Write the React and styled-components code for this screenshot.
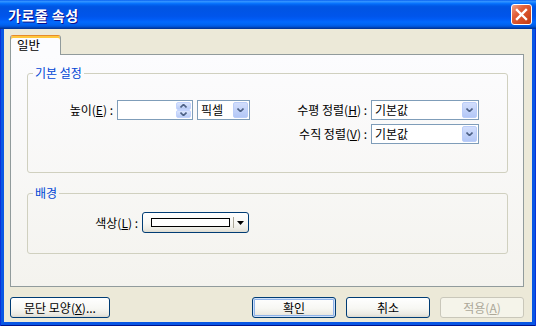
import React from 'react';
import styled, { createGlobalStyle } from 'styled-components';

const GlobalStyle = createGlobalStyle`
    html, body {
        margin: 0;
        padding: 0;
        background: #ffffff;
        overflow: hidden;
    }
    body {
        font-family: "Noto Sans CJK KR", "Noto Sans", sans-serif;
        font-size: 12px;
        color: #000000;
    }
`;

const Window = styled.div`
    width: 536px;
    height: 326px;
    display: flex;
    flex-direction: column;
    background: #0856e4;
    box-shadow: inset 1px 0 0 #0831d9, inset -1px 0 0 #0831d9, inset 0 -1px 0 #00138c;
`;

const TitleBar = styled.div`
    height: 29px;
    flex: none;
    display: flex;
    align-items: center;
    justify-content: space-between;
    padding: 0 4px 0 8px;
    background: linear-gradient(
        to bottom,
        #0058ee 0%,
        #3593ff 4%,
        #288eff 7%,
        #127dff 10%,
        #036ffc 13%,
        #0262ee 17%,
        #0057e5 22%,
        #0054e3 28%,
        #0055eb 56%,
        #005bf5 66%,
        #026afe 76%,
        #0062ef 86%,
        #0052d6 92%,
        #0040ab 96%,
        #003092 100%
    );
`;

const Title = styled.span`
    color: #ffffff;
    font-weight: bold;
    font-size: 14px;
    letter-spacing: 0.5px;
    text-shadow: 1px 1px 0 #0f1089;
`;

const CloseButton = styled.div`
    width: 21px;
    height: 21px;
    box-sizing: border-box;
    border: 1px solid #ffffff;
    border-radius: 3px;
    display: flex;
    align-items: center;
    justify-content: center;
    background: linear-gradient(135deg, #f0a38a 0%, #e2603a 35%, #d24a22 70%, #c23a12 100%);
`;

const Body = styled.div`
    flex: 1;
    margin: 0 4px 4px;
    background: #ece9d8;
    display: flex;
    flex-direction: column;
    padding: 6px 8px 4px 6px;
`;

const TabRow = styled.div`
    height: 19px;
    display: flex;
    align-items: flex-start;
`;

const Tab = styled.div`
    position: relative;
    z-index: 1;
    width: 51px;
    height: 20px;
    box-sizing: border-box;
    padding: 1px 0 0 6px;
    line-height: 16px;
    font-size: 12.5px;
    background: #fcfcfe;
    border: 1px solid #919b9c;
    border-top-color: #e68b2c;
    border-bottom: none;
    border-radius: 3px 3px 0 0;
    box-shadow: inset 0 2px 0 #ffc73c;
`;

const Panel = styled.div`
    height: 233px;
    box-sizing: border-box;
    border: 1px solid #919b9c;
    background: linear-gradient(to bottom, #fcfcfe, #f4f3ee);
    padding: 11px 15px 0 16px;
    display: flex;
    flex-direction: column;
    gap: 13px;
`;

const Group = styled.fieldset`
    margin: 0;
    min-width: 0;
    height: ${p => p.$height}px;
    box-sizing: border-box;
    padding: ${p => p.$pad}px 0 0 0;
    border: 1px solid #d0d0bf;
    border-radius: 3px;
`;

const Legend = styled.legend`
    margin-left: 5px;
    padding: 0 2px;
    color: #0046d5;
    font-size: 12px;
    line-height: 14px;
`;

const FieldGrid = styled.div`
    display: grid;
    grid-template-columns: ${p => p.$cols};
    grid-auto-rows: ${p => p.$row || 20}px;
    column-gap: 4px;
    row-gap: 4px;
    align-items: center;
`;

const Label = styled.div`
    grid-column: ${p => p.$col || 'auto'};
    text-align: right;
    white-space: nowrap;
    line-height: 20px;
`;

const SpinBox = styled.div`
    height: 20px;
    box-sizing: border-box;
    border: 1px solid #7f9db9;
    background: #ffffff;
    display: flex;
    justify-content: flex-end;
    padding: 1px;
`;

const SpinButtons = styled.div`
    width: 15px;
    display: flex;
    flex-direction: column;
`;

const SpinButton = styled.div`
    flex: 1;
    display: flex;
    align-items: center;
    justify-content: center;
    border: 1px solid #c3d3fd;
    border-radius: 2px;
    background: linear-gradient(to bottom, #dbe5fd, #b8cbf6);
`;

const Combo = styled.div`
    grid-column: ${p => p.$col || 'auto'};
    height: 20px;
    box-sizing: border-box;
    border: 1px solid #7f9db9;
    background: #ffffff;
    display: flex;
    align-items: center;
    justify-content: space-between;
    padding: 1px 1px 1px 3px;
`;

const ComboValue = styled.span`
    line-height: 16px;
    white-space: nowrap;
`;

const DropButton = styled.div`
    width: 15px;
    height: 16px;
    box-sizing: border-box;
    border: 1px solid #bacdf8;
    border-radius: 2px;
    background: linear-gradient(to bottom, #d2defc, #b3c7f6);
    display: flex;
    align-items: center;
    justify-content: center;
`;

const PushButton = styled.div`
    width: ${p => p.$width || 84}px;
    height: ${p => p.$height || 21}px;
    box-sizing: border-box;
    border: 1px solid ${p => (p.$disabled ? '#c9c7ba' : '#003c74')};
    border-radius: 3px;
    background: ${p =>
        p.$disabled
            ? '#f5f4ea'
            : 'linear-gradient(to bottom, #ffffff 0%, #f7f7f3 55%, #ebeae3 85%, #dcdad0 100%)'};
    color: ${p => (p.$disabled ? '#aca899' : '#000000')};
    box-shadow: ${p =>
        p.$default ? 'inset 0 0 0 1px #cee0fa, inset 0 0 0 2px #8fb3e8' : 'none'};
    display: flex;
    align-items: center;
    justify-content: center;
    line-height: 16px;
    white-space: nowrap;
`;

const ColorButton = styled(PushButton)`
    justify-content: flex-start;
    padding-left: 8px;
    gap: 3px;
`;

const Swatch = styled.div`
    width: 77px;
    height: 7px;
    border: 1px solid #000000;
    background: #ffffff;
`;

const Separator = styled.div`
    width: 1px;
    height: 11px;
    background: #aca899;
`;

const ButtonRow = styled.div`
    margin-top: 10px;
    height: 21px;
    display: flex;
    align-items: center;
    justify-content: space-between;
`;

const ActionGroup = styled.div`
    display: flex;
    gap: 10px;
`;

const Chevron = ({ up }) => (
    <svg width="7" height="4" viewBox="0 0 7 4">
        <path
            d={up ? 'M0.5 3.5 L3.5 0.5 L6.5 3.5' : 'M0.5 0.5 L3.5 3.5 L6.5 0.5'}
            fill="none"
            stroke="#4d6185"
            strokeWidth="1.6"
        />
    </svg>
);

const Triangle = () => (
    <svg width="7" height="4" viewBox="0 0 7 4">
        <path d="M0 0 H7 L3.5 4 Z" fill="#000000" />
    </svg>
);

function App() {
    return (
        <>
            <GlobalStyle />
            <Window>
                <TitleBar>
                    <Title>가로줄 속성</Title>
                    <CloseButton>
                        <svg width="13" height="13" viewBox="0 0 13 13">
                            <path d="M2 2 L11 11 M11 2 L2 11" stroke="#ffffff" strokeWidth="2.4" strokeLinecap="square" />
                        </svg>
                    </CloseButton>
                </TitleBar>
                <Body>
                    <TabRow>
                        <Tab>일반</Tab>
                    </TabRow>
                    <Panel>
                        <Group $height={107} $pad={20}>
                            <Legend>기본 설정</Legend>
                            <FieldGrid $cols="85px 76px 53px 113px 108px">
                                <Label>높이(<u>E</u>) :</Label>
                                <SpinBox>
                                    <SpinButtons>
                                        <SpinButton><Chevron up /></SpinButton>
                                        <SpinButton><Chevron /></SpinButton>
                                    </SpinButtons>
                                </SpinBox>
                                <Combo>
                                    <ComboValue>픽셀</ComboValue>
                                    <DropButton><Chevron /></DropButton>
                                </Combo>
                                <Label>수평 정렬(<u>H</u>) :</Label>
                                <Combo>
                                    <ComboValue>기본값</ComboValue>
                                    <DropButton><Chevron /></DropButton>
                                </Combo>
                                <Label $col={4}>수직 정렬(<u>V</u>) :</Label>
                                <Combo $col={5}>
                                    <ComboValue>기본값</ComboValue>
                                    <DropButton><Chevron /></DropButton>
                                </Combo>
                            </FieldGrid>
                        </Group>
                        <Group $height={68} $pad={12}>
                            <Legend>배경</Legend>
                            <FieldGrid $cols="110px 107px" $row={21}>
                                <Label>색상(<u>L</u>) :</Label>
                                <ColorButton $width={107}>
                                    <Swatch />
                                    <Separator />
                                    <Triangle />
                                </ColorButton>
                            </FieldGrid>
                        </Group>
                    </Panel>
                    <ButtonRow>
                        <PushButton $width={100}>문단 모양(<u>X</u>)...</PushButton>
                        <ActionGroup>
                            <PushButton $default>확인</PushButton>
                            <PushButton>취소</PushButton>
                            <PushButton $disabled>적용(<u>A</u>)</PushButton>
                        </ActionGroup>
                    </ButtonRow>
                </Body>
            </Window>
        </>
    );
}

export default App;
